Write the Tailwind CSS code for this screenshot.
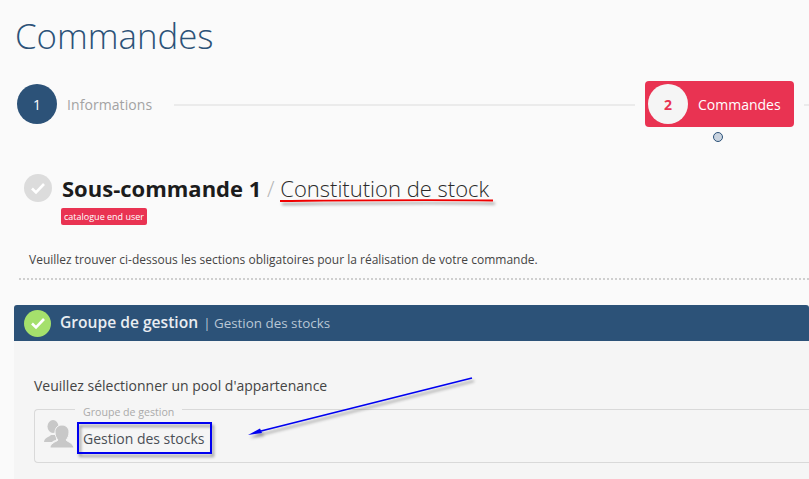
<!DOCTYPE html>
<html lang="fr">
<head>
    <meta charset="UTF-8">
    <meta name="viewport" content="width=device-width, initial-scale=1.0">
    <title>Commandes</title>
    <script src="https://cdn.jsdelivr.net/npm/@tailwindcss/browser@4"></script>
</head>
<body class="relative w-[809px] h-[479px] overflow-hidden bg-[#fafafa] font-['Open_Sans',sans-serif]">
    <!-- titre -->
    <h1 class="pl-[15px] pt-[13px] h-[81px] text-[34.8px] leading-[46px] font-light text-[#2c5278]">Commandes</h1>

    <!-- etapes -->
    <div class="relative flex items-center h-[46px] pl-[17px]">
        <div class="flex items-center justify-center w-10 h-10 rounded-full bg-[#2c5278] text-white text-[14px]">1</div>
        <span class="ml-[10px] w-[85px] text-[14px] tracking-[0.005em] text-[#a3a3a3] whitespace-nowrap">Informations</span>
        <div class="ml-[22px] w-[461px] h-[2px] mt-[1px] bg-[#ebebeb]"></div>
        <div class="ml-[10px] flex items-center w-[149px] h-[46px] pl-[3px] rounded-[4px] bg-[#e93352]">
            <div class="flex items-center justify-center w-10 h-10 rounded-full bg-[#f5f5f5] text-[#e93352] text-[14px] font-bold">2</div>
            <span class="ml-[10px] text-[14px] text-white">Commandes</span>
        </div>
        <div class="ml-[10px] flex-1 h-[2px] mt-[1px] bg-[#ebebeb]"></div>
        <div class="absolute left-[713px] top-[51px] w-[10px] h-[10px] rounded-full bg-[#c9d3df] border border-[#2c5278]"></div>
    </div>

    <!-- sous-commande -->
    <div class="flex items-center h-[28px] mt-[47px] pl-[24px]">
        <div class="flex items-center justify-center w-[28px] h-[28px] rounded-full bg-[#dcdcdc]">
            <svg class="w-4 h-4" viewBox="0 0 16 16" fill="none" stroke="#fff" stroke-width="2.6"><path d="M2 8.5l4 4 8-8.5"/></svg>
        </div>
        <h2 class="ml-[10px] text-[22px] leading-[28px] font-bold text-[#1c1c1c] whitespace-nowrap">Sous-commande 1 <span class="font-light text-[#b5b5b5]">/</span> <span class="font-light text-[#2a2a2a]">Constitution de stock</span></h2>
    </div>
    <span class="block ml-[61px] mt-[6px] w-[86px] h-[17px] rounded-[2px] bg-[#e93352] text-white text-[9px] leading-[17px] text-center whitespace-nowrap">catalogue end user</span>
    <p class="ml-[29px] mt-[25px] h-[20px] text-[12px] leading-[20px] text-[#444] whitespace-nowrap">Veuillez trouver ci-dessous les sections obligatoires pour la réalisation de votre commande.</p>
    <div class="ml-[19px] mt-[8px] border-t-2 border-dotted border-[#cfcfcf]"></div>

    <!-- panneau -->
    <section class="ml-[14px] mt-[25px] bg-[#f5f5f5]">
        <div class="flex items-center h-[36px] pl-[10px] rounded-t-[3px] bg-[#2c5278]">
            <div class="flex items-center justify-center w-[27px] h-[27px] rounded-full bg-[#a5e06c]">
                <svg class="w-4 h-4" viewBox="0 0 16 16" fill="none" stroke="#fff" stroke-width="2.6"><path d="M2 8.5l4 4 8-8.5"/></svg>
            </div>
            <span class="ml-[9px] text-[15.6px] font-semibold text-[#e9edf1]">Groupe de gestion</span>
            <span class="ml-[5px] text-[13.4px] text-[#b8c6d5]">| Gestion des stocks</span>
        </div>
        <div class="pt-[35px] pb-[20px] pl-[20px]">
            <p class="text-[14px] leading-[20px] text-[#444]">Veuillez sélectionner un pool d'appartenance</p>
            <div class="relative mt-[13px] h-[54px] rounded-l-[4px] border border-r-0 border-[#d9d9d9]">
                <span class="absolute left-[40px] -top-[5px] px-[8px] bg-[#f5f5f5] text-[10.6px] leading-[14px] text-[#aaa] whitespace-nowrap">Groupe de gestion</span>
                <div class="flex items-start pl-[9px] pt-[10px]">
                    <svg class="w-[30px] h-[28px]" viewBox="0 0 30 28" fill="#c8c8c8">
                        <ellipse cx="9" cy="6.500" rx="5.500" ry="6.500"/>
                        <path d="M0 22c0-4 5-5 7-7h5v5c-2 0-3 1-4 2z"/>
                        <path stroke="#f5f5f5" d="M6 28c0-5 6-6 8-8-2-2-3-5-3-8 0-4 3-7 7-7s7 3 7 7c0 3-1 6-3 8 2 2 7 3 8 8z"/>
                    </svg>
                    <span class="ml-[9px] mt-[9px] text-[14px] leading-[20px] text-[#4a4f55]">Gestion des stocks</span>
                </div>
            </div>
        </div>
    </section>

    <!-- annotations -->
    <svg class="absolute left-0 top-0 w-[809px] h-[479px] pointer-events-none" viewBox="0 0 809 479" fill="none">
        <defs><filter id="ombre" x="-10%" y="-10%" width="120%" height="130%"><feDropShadow dx="2" dy="3" stdDeviation="1.500" flood-color="#000" flood-opacity="0.4"/></filter></defs>
        <g filter="url(#ombre)">
            <path d="M280 201C340 200.500 420 199.500 493 200.500" stroke="#f00000" stroke-width="1.800"/>
            <rect x="78" y="423" width="133" height="30" stroke="#0000f0" stroke-width="2"/>
            <path d="M472 378L257 432" stroke="#0000f0" stroke-width="1.800"/>
            <path d="M248 435L260 428.500L262 433z" fill="#0000f0"/>
        </g>
    </svg>
</body>
</html>
